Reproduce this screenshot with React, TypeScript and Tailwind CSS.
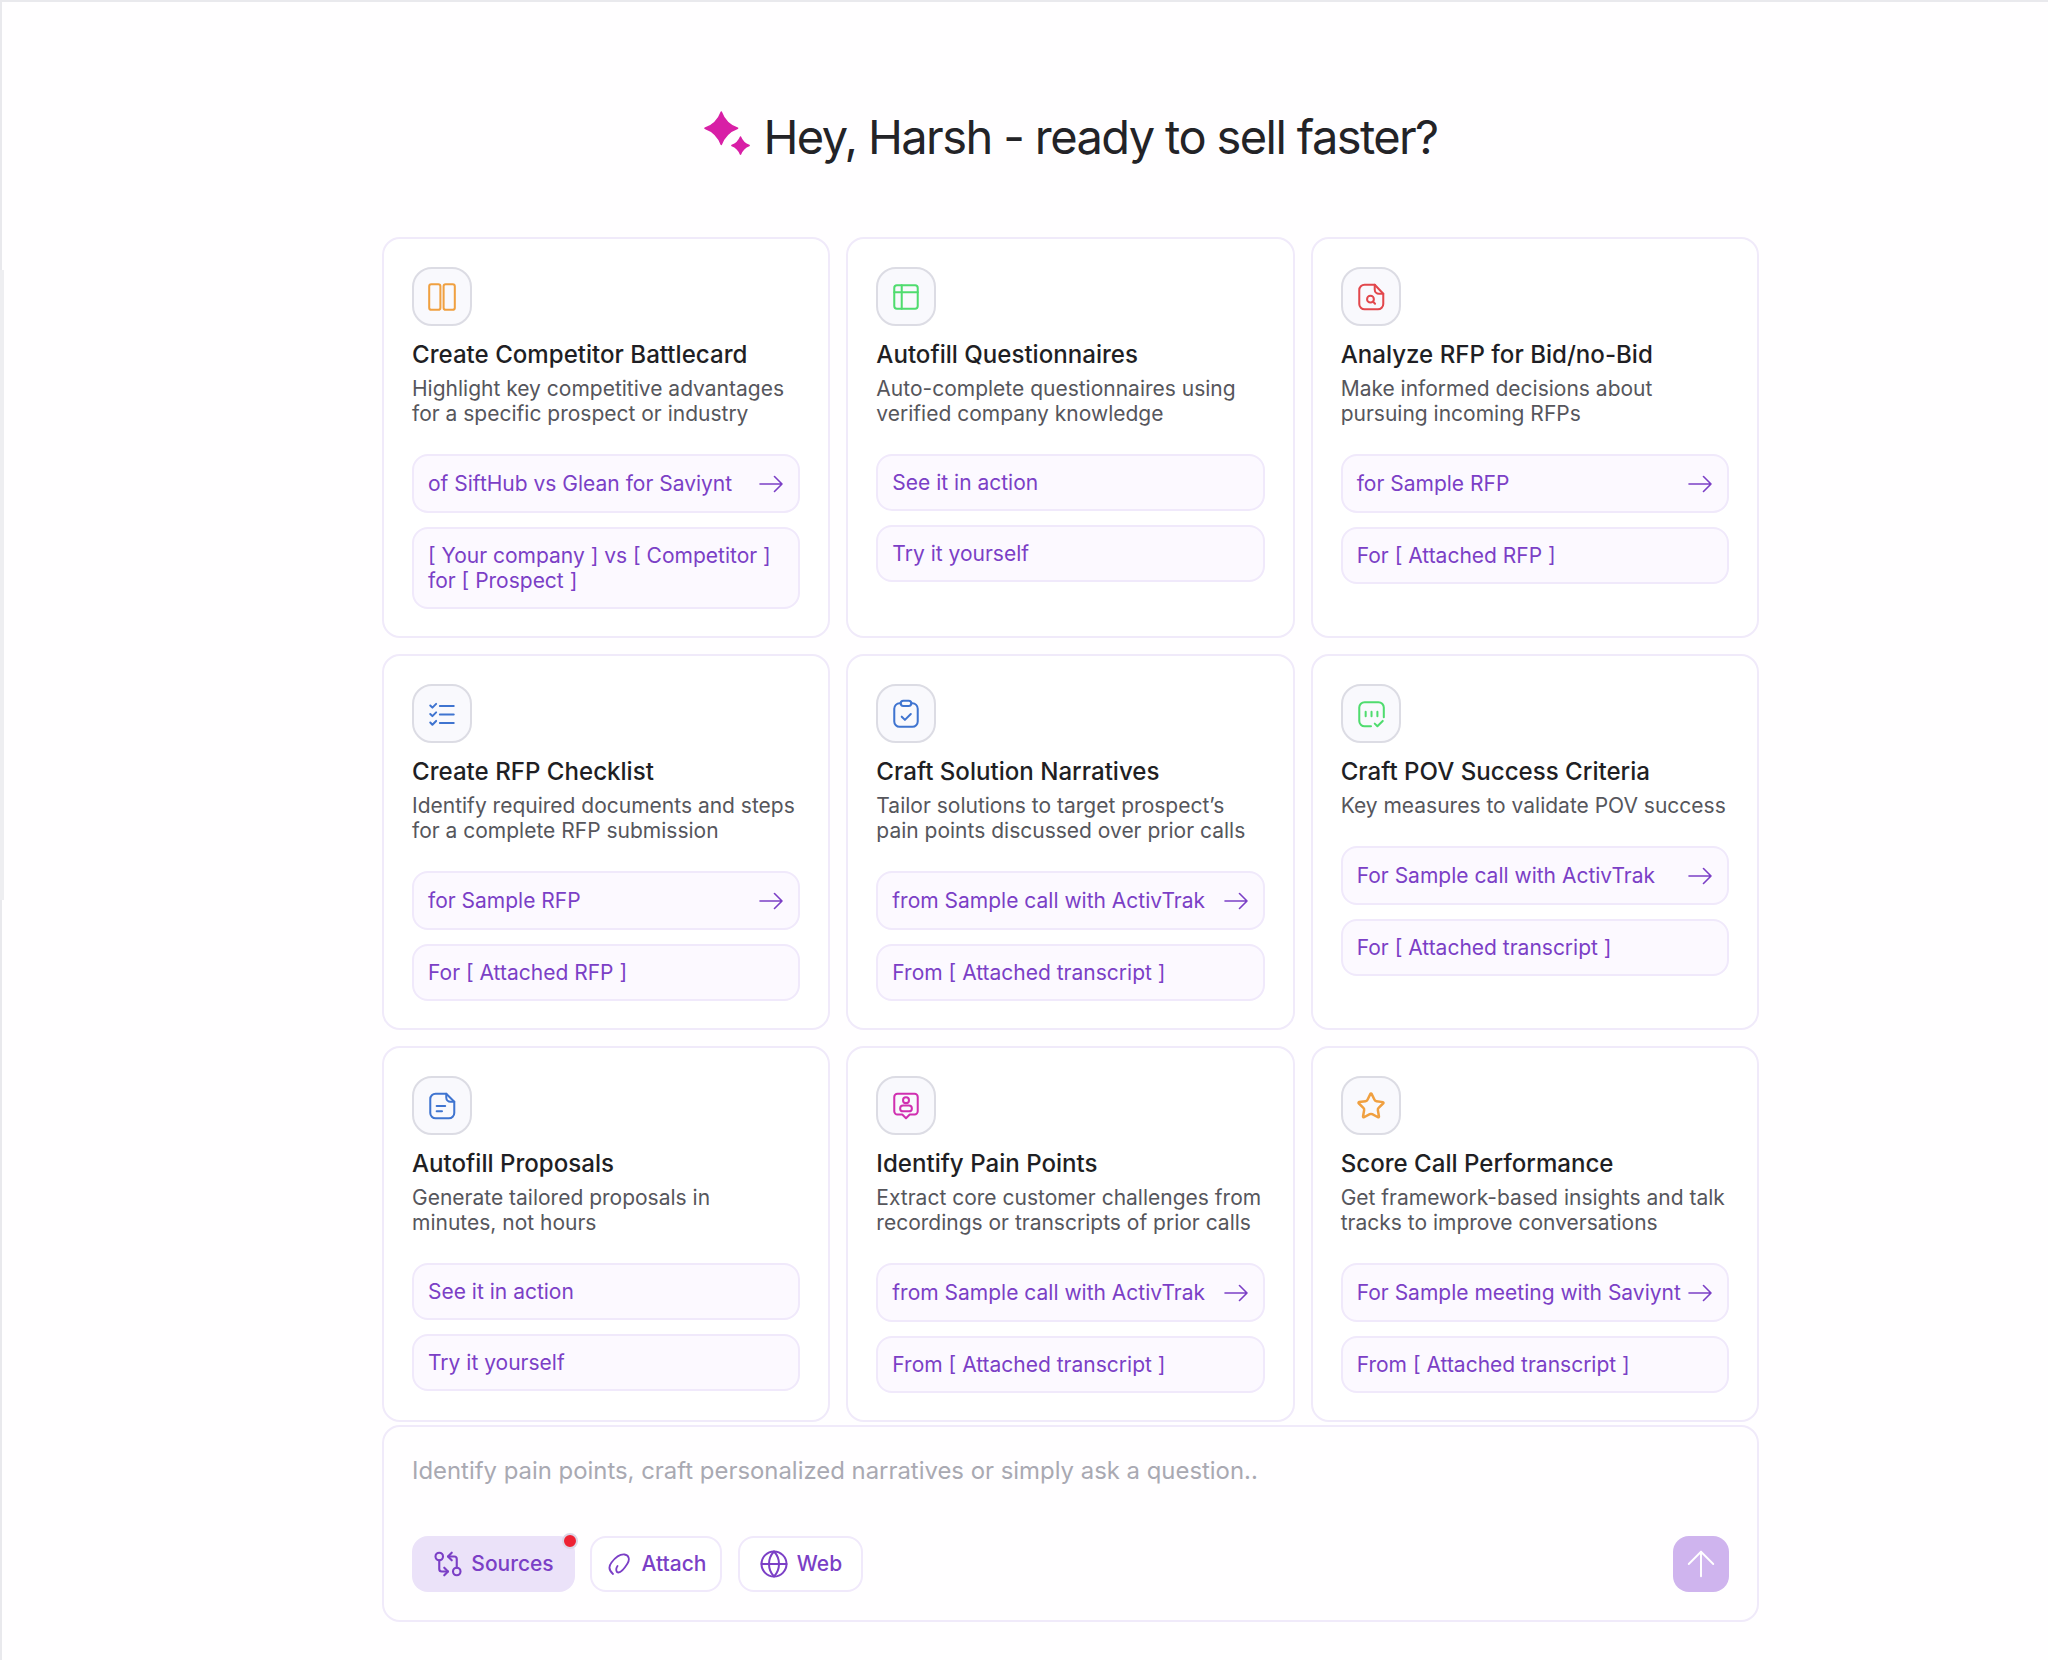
import { ArrowUp, GitCompareArrows, Globe, Star } from "lucide-react";
import type { ReactNode } from "react";

type Action = {
  label: string;
  arrow?: boolean;
};

type Card = {
  title: string;
  description: string;
  icon: ReactNode;
  actions: Action[];
};

const Glyph = ({ children, color }: { children: ReactNode; color: string }) => (
  <svg width="32" height="32" viewBox="0 0 30 30" fill="none" stroke={color} strokeWidth="1.9" strokeLinecap="round" strokeLinejoin="round">
    {children}
  </svg>
);

const cards: Card[] = [
  {
    title: "Create Competitor Battlecard",
    description: "Highlight key competitive advantages for a specific prospect or industry",
    icon: (
      <Glyph color="#f0a040">
        <rect x="3" y="3" width="10.500" height="24" rx="2" />
        <rect x="16.500" y="3" width="10.500" height="24" rx="2" />
      </Glyph>
    ),
    actions: [
      { label: "of SiftHub vs Glean for Saviynt", arrow: true },
      { label: "[ Your company ] vs [ Competitor ] for [ Prospect ]" },
    ],
  },
  {
    title: "Autofill Questionnaires",
    description: "Auto-complete questionnaires using verified company knowledge",
    icon: (
      <Glyph color="#4fdc6e">
        <rect x="4" y="4" width="22" height="22" rx="2.500" />
        <path d="M4 10.500h22M11 4v22" />
      </Glyph>
    ),
    actions: [{ label: "See it in action" }, { label: "Try it yourself" }],
  },
  {
    title: "Analyze RFP for Bid/no-Bid",
    description: "Make informed decisions about pursuing incoming RFPs",
    icon: (
      <Glyph color="#e2474c">
        <path d="M9 3.500h9.500L26.500 12v9.500a5 5 0 0 1-5 5H9a5 5 0 0 1-5-5v-13a5 5 0 0 1 5-5Z" />
        <path d="M18.500 3.500V8a4 4 0 0 0 4 4h4" />
        <circle cx="14.500" cy="17" r="3.200" />
        <path d="m17 19.500 1.800 1.800" />
      </Glyph>
    ),
    actions: [{ label: "for Sample RFP", arrow: true }, { label: "For [ Attached RFP ]" }],
  },
  {
    title: "Create RFP Checklist",
    description: "Identify required documents and steps for a complete RFP submission",
    icon: (
      <Glyph color="#3f74d0">
        <path d="m4 7 2 2 3.500-3.500M4 15l2 2 3.500-3.500M4 23l2 2 3.500-3.500" />
        <path d="M13 7.500h13M13 15.500h13M13 23.500h13" />
      </Glyph>
    ),
    actions: [{ label: "for Sample RFP", arrow: true }, { label: "For [ Attached RFP ]" }],
  },
  {
    title: "Craft Solution Narratives",
    description: "Tailor solutions to target prospect’s pain points discussed over prior calls",
    icon: (
      <Glyph color="#3f74d0">
        <rect x="10" y="2.500" width="10" height="5" rx="2.500" />
        <path d="M10 5H9a5 5 0 0 0-5 5v12a5 5 0 0 0 5 5h12a5 5 0 0 0 5-5V10a5 5 0 0 0-5-5h-1" />
        <path d="m11 17.500 3 3 5.500-5.500" />
      </Glyph>
    ),
    actions: [{ label: "from Sample call with ActivTrak", arrow: true }, { label: "From [ Attached transcript ]" }],
  },
  {
    title: "Craft POV Success Criteria",
    description: "Key measures to validate POV success",
    icon: (
      <Glyph color="#4fdc6e">
        <path d="M15 26.500H9a5 5 0 0 1-5-5V9a5 5 0 0 1 5-5h13a5 5 0 0 1 5 5v9" />
        <path d="M10 13v4M15.500 13v4M21 13v4" />
        <path d="m18.500 24 2.500 2.500 5-5" />
      </Glyph>
    ),
    actions: [{ label: "For Sample call with ActivTrak", arrow: true }, { label: "For [ Attached transcript ]" }],
  },
  {
    title: "Autofill Proposals",
    description: "Generate tailored proposals in\nminutes, not hours",
    icon: (
      <Glyph color="#3f74d0">
        <path d="M9 3.500h10L26.500 11v10.500a5 5 0 0 1-5 5H9a5 5 0 0 1-5-5v-13a5 5 0 0 1 5-5Z" />
        <path d="M19 3.500V7a4 4 0 0 0 4 4h3.500" />
        <path d="M10 15h8M10 20h5" />
      </Glyph>
    ),
    actions: [{ label: "See it in action" }, { label: "Try it yourself" }],
  },
  {
    title: "Identify Pain Points",
    description: "Extract core customer challenges from recordings or transcripts of prior calls",
    icon: (
      <Glyph color="#d02fb0">
        <path d="M7 3.500h16a3 3 0 0 1 3 3V20a3 3 0 0 1-3 3h-4.500L15 26.500 11.500 23H7a3 3 0 0 1-3-3V6.500a3 3 0 0 1 3-3Z" />
        <circle cx="15" cy="9.500" r="2.800" />
        <rect x="9.500" y="14.500" width="11" height="5.500" rx="2.750" />
      </Glyph>
    ),
    actions: [{ label: "from Sample call with ActivTrak", arrow: true }, { label: "From [ Attached transcript ]" }],
  },
  {
    title: "Score Call Performance",
    description: "Get framework-based insights and talk tracks to improve conversations",
    icon: <Star size={30} color="#f0a040" strokeWidth={2} />,
    actions: [{ label: "For Sample meeting with Saviynt", arrow: true }, { label: "From [ Attached transcript ]" }],
  },
];

function LongArrow() {
  return (
    <svg width="24" height="24" viewBox="0 0 24 24" fill="none" stroke="currentColor" strokeWidth="1.6" strokeLinecap="round" strokeLinejoin="round" className="shrink-0">
      <path d="M1 12h22M15.500 4.500 23 12l-7.500 7.500" />
    </svg>
  );
}

function ActionButton({ action }: { action: Action }) {
  return (
    <button
      className={`flex w-full items-center justify-between rounded-2xl border-2 border-[#f0e9fb] bg-[#fcf9ff] pl-[14px] pr-[15px] text-left text-[21px] leading-[25px] text-[#7b3fc6] ${
        action.arrow ? "h-[59px]" : "py-[14px]"
      }`}
    >
      <span>{action.label}</span>
      {action.arrow && <LongArrow />}
    </button>
  );
}

function PromptCard({ card }: { card: Card }) {
  return (
    <div className="flex flex-col rounded-[18px] border-2 border-[#f0eafa] bg-white px-[28px] pt-[28px] pb-[27px]">
      <div className="flex h-[59px] w-[60px] items-center justify-center rounded-[20px] border-2 border-[#dcdce4] bg-[#f9f9fd]">
        {card.icon}
      </div>
      <h2 className="mt-[13px] text-[24.1px] leading-[32px] font-medium text-[#1f1f24]">{card.title}</h2>
      <p className="mt-[5px] whitespace-pre-line text-[21px] leading-[25px] text-[#56565c]">{card.description}</p>
      <div className="mt-[28px] flex flex-col gap-[14px]">
        {card.actions.map((a) => (
          <ActionButton key={a.label} action={a} />
        ))}
      </div>
    </div>
  );
}

export default function App() {
  return (
    <div className="relative min-h-[1660px] border-t-2 border-l-2 border-[#e9e9ed] bg-[#fffeff] pl-[380px] [font-family:Inter,sans-serif]">
      <span className="absolute top-[268px] left-[-2px] h-[630px] w-[4px] bg-[#eeeef1]" />
      <div className="w-[1377px]">
        <header className="flex h-[235px] items-start justify-center pt-[107px]">
          <div className="flex items-center gap-[10px]">
            <svg width="50" height="50" viewBox="0 0 52 50" fill="#d81fa6" stroke="#d81fa6" strokeWidth="1.500" strokeLinejoin="round" className="mt-[-6px]">
              <path d="M19 2Q23.500 14.500 36 19Q23.500 23.500 19 36Q14.500 23.500 2 19Q14.500 14.500 19 2Z" />
              <path d="M39 28Q41.500 34.500 48 37Q41.500 39.500 39 46Q36.500 39.500 30 37Q36.500 34.500 39 28Z" />
            </svg>
            <h1 className="text-[47px] leading-[56px] font-normal tracking-[-0.034em] text-[#232327]">Hey, Harsh - ready to sell faster?</h1>
          </div>
        </header>
        <div className="grid grid-cols-3 gap-[16px]">
          {cards.map((c) => (
            <PromptCard key={c.title} card={c} />
          ))}
        </div>
        <div className="mt-[3px] h-[197px] rounded-[18px] border-2 border-[#f0eafa] bg-[#fffeff] px-[28px] pt-[28px]">
          <p className="text-[23.9px] leading-[32px] text-[#a9a9b2]">Identify pain points, craft personalized narratives or simply ask a question..</p>
          <div className="mt-[49px] flex items-center">
            <div className="relative flex h-[56px] w-[163px] items-center justify-center gap-[8px] rounded-2xl bg-[#ebe2f9] text-[21px] font-medium text-[#7b3fc6]">
              <GitCompareArrows size={30} strokeWidth={1.7} />
              Sources
              <span className="absolute top-[-3px] right-[-3px] h-[16px] w-[16px] rounded-full border-2 border-[#dcd6e6] bg-[#ee2233]" />
            </div>
            <div className="ml-[15px] flex h-[56px] w-[132px] items-center justify-center gap-[10px] rounded-2xl border-2 border-[#f0e9fb] bg-white text-[21px] font-medium text-[#7b3fc6]">
              <svg width="26" height="26" viewBox="0 0 26 26" fill="none" stroke="currentColor" strokeWidth="1.800" strokeLinecap="round">
                <path d="M7 23C3.500 20 2 16 5.500 11.500 9 7 14 3 18.500 3.500 23 4 24 8.500 21.500 12.500 19 16.500 15 21.500 12.500 21.500 10 21.500 9.500 18 11.500 15" />
              </svg>
              Attach
            </div>
            <div className="ml-[16px] flex h-[56px] w-[125px] items-center justify-center gap-[8px] rounded-2xl border-2 border-[#f0e9fb] bg-white text-[21px] font-medium text-[#7b3fc6]">
              <Globe size={30} strokeWidth={1.6} />
              Web
            </div>
            <button className="ml-auto flex h-[56px] w-[56px] items-center justify-center rounded-2xl bg-[#cfb4ee] text-white">
              <ArrowUp size={42} strokeWidth={1.100} />
            </button>
          </div>
        </div>
      </div>
    </div>
  );
}
